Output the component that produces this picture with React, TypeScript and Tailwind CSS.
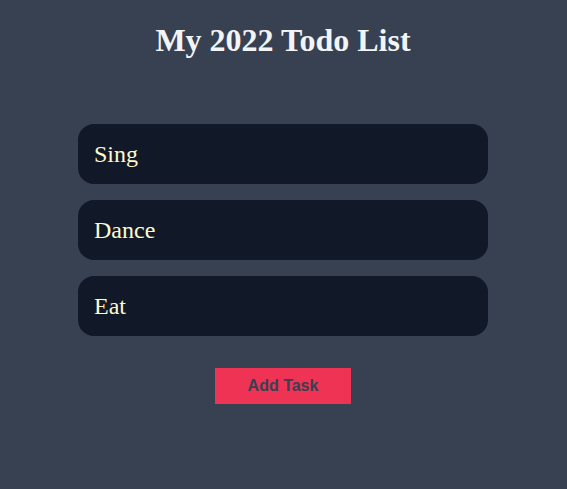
export default function App() {
  const tasks = ["Sing", "Dance", "Eat"];
  return (
    <div className="min-h-[489px] w-full bg-[#374151]" style={{ fontFamily: '"Liberation Serif", serif' }}>
      <div className="w-[566px] flex flex-col items-center">
        <h1 className="mt-[22px] text-[32px] leading-[37px] font-bold text-[#f3f4f6]">My 2022 Todo List</h1>
        <div className="mt-[65px] w-[410px] flex flex-col gap-4">
          {tasks.map((t) => (
            <div key={t} className="h-[60px] rounded-2xl bg-[#111827] flex items-center px-4 text-[24px] text-[#fffacd]">
              {t}
            </div>
          ))}
        </div>
        <button
          className="mt-8 w-[136px] h-[36px] bg-[#ef3355] text-[#374151] font-bold text-[16px]"
          style={{ fontFamily: '"Liberation Sans", Arial, sans-serif' }}
        >
          Add Task
        </button>
      </div>
    </div>
  );
}
